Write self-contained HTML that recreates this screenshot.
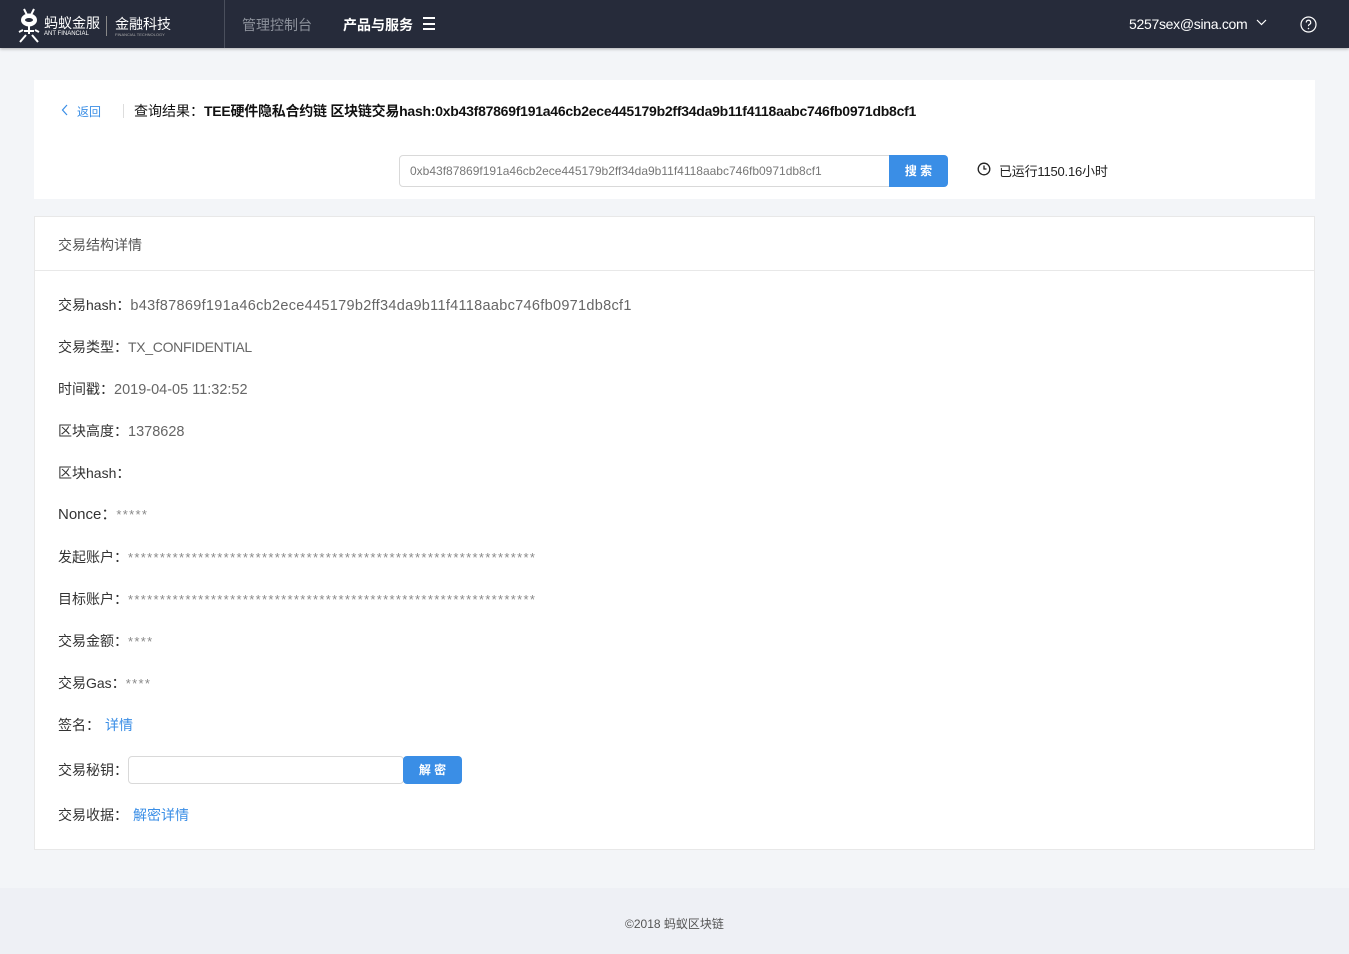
<!DOCTYPE html>
<html><head><meta charset="utf-8"><style>
*{margin:0;padding:0;box-sizing:border-box}
body{width:1349px;height:954px;background:#f3f5f8;font-family:"Liberation Sans","Noto Sans CJK SC",sans-serif;position:relative;overflow:hidden;color:#333}
.hdr{position:absolute;left:0;top:0;width:1349px;height:48px;background:#262b3a;box-shadow:0 1px 3px rgba(0,0,0,.3)}
.abs{position:absolute;white-space:nowrap}
.card{position:absolute;background:#fff}
.row{position:absolute;left:58px;font-size:14px;color:#333;white-space:nowrap;line-height:20px}
.row .v{color:#666;font-size:14.5px}
.stars{color:#888;letter-spacing:1.32px;font-size:13px}
a{color:#3a8ee6;text-decoration:none}
</style></head><body>
<div class="hdr">
 <svg class="abs" style="left:14px;top:6px" width="30" height="40" viewBox="0 0 30 40" fill="none" stroke="#fff" stroke-width="2">
  <path d="M10 3l3 6M20 3l-3 6"/><ellipse cx="15" cy="14" rx="7" ry="5.5" fill="#fff"/><ellipse cx="15" cy="14" rx="4" ry="2" fill="#262b3a" stroke="none"/>
  <path d="M15 20v8M9 24l-4 2M21 24l4 2M12 29l-6 7M18 29l6 7M10 25h10"/>
 </svg>
 <div class="abs" style="left:44px;top:13px;color:#fff;font-size:14px">蚂蚁金服</div>
 <div class="abs" style="left:44px;top:31px;color:#fff;font-size:6px">ANT FINANCIAL</div>
 <div class="abs" style="left:106px;top:16px;width:1px;height:20px;background:#888"></div>
 <div class="abs" style="left:115px;top:14px;color:#fff;font-size:14px">金融科技</div>
 <div class="abs" style="left:115px;top:32px;color:#aaa;font-size:4px">FINANCIAL TECHNOLOGY</div>
 <div class="abs" style="left:224px;top:0;width:1px;height:48px;background:#4a4f5c"></div>
 <div class="abs" style="left:242px;top:15px;color:#8d929c;font-size:14px">管理控制台</div>
 <div class="abs" style="left:343px;top:15px;color:#fff;font-size:14px;font-weight:bold">产品与服务</div>
 <div class="abs" style="left:423px;top:17px;width:12px;height:13px;border-top:2px solid #fff;border-bottom:2px solid #fff"><div style="margin-top:4px;height:1.5px;background:#fff"></div></div>
 <div class="abs" style="left:1129px;top:16px;color:#fff;font-size:14px;letter-spacing:-0.3px">5257sex@sina.com</div>
 <svg class="abs" style="left:1256px;top:19px" width="11" height="8"><path d="M1 1l4.5 4.5L10 1" stroke="#fff" fill="none" stroke-width="1.2"/></svg>
 <svg class="abs" style="left:1300px;top:16px" width="17" height="17"><circle cx="8.5" cy="8.5" r="7.5" stroke="#fff" fill="none" stroke-width="1.2"/><path d="M6.3 6.5a2.2 2.2 0 1 1 3 2c-.7.3-.8.8-.8 1.6" stroke="#fff" fill="none" stroke-width="1.2"/><circle cx="8.5" cy="12.5" r=".8" fill="#fff"/></svg>
</div>

<div class="card" style="left:34px;top:80px;width:1281px;height:119px">
 <svg class="abs" style="left:27px;top:24px" width="8" height="12"><path d="M6 1L1.5 6 6 11" stroke="#3a8ee6" fill="none" stroke-width="1.2"/></svg>
 <div class="abs" style="left:43px;top:23px;font-size:12px;color:#3a8ee6">返回</div>
 <div class="abs" style="left:89px;top:24px;width:1px;height:14px;background:#ddd"></div>
 <div class="abs" style="left:100px;top:21px;font-size:14px;color:#111">查询结果：<b style="font-weight:bold;letter-spacing:-0.25px">TEE硬件隐私合约链 区块链交易hash:0xb43f87869f191a46cb2ece445179b2ff34da9b11f4118aabc746fb0971db8cf1</b></div>
 <div class="abs" style="left:365px;top:75px;width:491px;height:32px;border:1px solid #d9d9d9;border-radius:4px 0 0 4px;font-size:12px;color:#777;padding:8px 10px">0xb43f87869f191a46cb2ece445179b2ff34da9b11f4118aabc746fb0971db8cf1</div>
 <div class="abs" style="left:855px;top:75px;width:59px;height:32px;background:#3a8ee6;border-radius:0 4px 4px 0;color:#fff;font-size:12px;font-weight:bold;text-align:center;line-height:32px">搜 索</div>
 <svg class="abs" style="left:943px;top:82px" width="14" height="14"><circle cx="7" cy="7" r="5.8" stroke="#222" fill="none" stroke-width="1.3"/><path d="M7 3.5V7h2.5" stroke="#222" fill="none" stroke-width="1.3"/></svg>
 <div class="abs" style="left:965px;top:81px;font-size:13px;color:#222;letter-spacing:-0.2px">已运行1150.16小时</div>
</div>

<div class="card" style="left:34px;top:216px;width:1281px;height:634px;border:1px solid #e8e8e8">
 <div class="abs" style="left:23px;top:18px;font-size:14px;color:#555">交易结构详情</div>
 <div class="abs" style="left:0;top:53px;width:1279px;height:1px;background:#e8e8e8"></div>
</div>

<div class="row" style="top:295px">交易hash：<span class="v" style="letter-spacing:0.3px">b43f87869f191a46cb2ece445179b2ff34da9b11f4118aabc746fb0971db8cf1</span></div>
<div class="row" style="top:337px">交易类型：<span class="v" style="font-size:14px;letter-spacing:-0.3px">TX_CONFIDENTIAL</span></div>
<div class="row" style="top:379px">时间戳：<span class="v">2019-04-05 11:32:52</span></div>
<div class="row" style="top:421px">区块高度：<span class="v">1378628</span></div>
<div class="row" style="top:463px">区块hash：</div>
<div class="row" style="top:505px;font-size:15px">Nonce：<span class="stars">*****</span></div>
<div class="row" style="top:547px">发起账户：<span class="stars">****************************************************************</span></div>
<div class="row" style="top:589px">目标账户：<span class="stars">****************************************************************</span></div>
<div class="row" style="top:631px">交易金额：<span class="stars">****</span></div>
<div class="row" style="top:673px">交易Gas：<span class="stars">****</span></div>
<div class="row" style="top:715px">签名：<a style="margin-left:5px">详情</a></div>
<div class="row" style="top:760px">交易秘钥：</div>
<div class="abs" style="left:128px;top:756px;width:276px;height:28px;border:1px solid #d9d9d9;border-radius:4px"></div>
<div class="abs" style="left:403px;top:756px;width:59px;height:28px;background:#3a8ee6;border-radius:4px;color:#fff;font-size:12px;font-weight:bold;text-align:center;line-height:28px">解 密</div>
<div class="row" style="top:805px">交易收据：<a style="margin-left:5px">解密详情</a></div>

<div class="abs" style="left:0;top:888px;width:1349px;height:66px;background:#eef0f5"></div>
<div class="abs" style="left:625px;top:915px;font-size:12px;color:#555">©2018 蚂蚁区块链</div>
</body></html>
